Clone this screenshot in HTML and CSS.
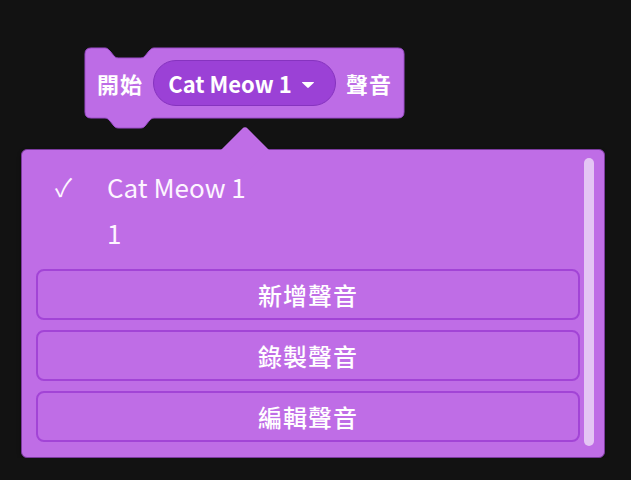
FILE: index.html
```html
<!DOCTYPE html>
<html lang="zh-Hant">
<head>
    <meta charset="UTF-8">
    <title>開始聲音</title>
    <link rel="stylesheet" href="styles.css">
</head>
<body>
    <div class="stage">
        <div class="block">
            <svg class="block-shape" width="321" height="83" viewBox="-1 -1 321 83">
                <path d="M 0 6 Q 0 0 6 0 H 20 C 22 0 23 1 25 3 L 29 8 C 31 10 32 10 35 10 H 54 C 57 10 58 10 60 8 L 64 3 C 66 1 67 0 69 0 H 313 Q 319 0 319 6 V 64 Q 319 70 313 70 H 69 C 67 70 66 71 64 73 L 60 78 C 58 80 57 80 54 80 H 35 C 32 80 31 80 29 78 L 25 73 C 23 71 22 70 20 70 H 6 Q 0 70 0 64 Z"/>
            </svg>
            <span class="block-label">開始</span>
            <span class="pill">
                Cat Meow 1
                <svg class="caret" width="14" height="8" viewBox="0 0 14 8">
                    <path d="M 1.5 1 H 12.5 Q 13.5 1 12.8 1.8 L 7.8 6.6 Q 7 7.3 6.2 6.6 L 1.2 1.8 Q 0.5 1 1.5 1 Z"/>
                </svg>
            </span>
            <span class="block-label">聲音</span>
        </div>

        <div class="dropdown">
            <div class="pointer"></div>
            <div class="scrollbar"></div>
            <ul class="options">
                <li class="option"><span class="check">✓</span>Cat Meow 1</li>
                <li class="option"><span class="check"></span>1</li>
            </ul>
            <div class="actions">
                <button class="action">新增聲音</button>
                <button class="action">錄製聲音</button>
                <button class="action">編輯聲音</button>
            </div>
        </div>
    </div>
</body>
</html>
```

FILE: styles.css
```css
body {
    margin: 0;
    background: #121212;
    font-family: "Noto Sans CJK TC", "Noto Sans", sans-serif;
    color: #fff;
}

.stage {
    padding: 48px 0 0 21px;
    display: flex;
    flex-direction: column;
    align-items: flex-start;
}

.block {
    position: relative;
    margin-left: 64px;
    width: 319px;
    height: 70px;
    padding: 0 12px;
    box-sizing: border-box;
    display: flex;
    align-items: center;
    justify-content: space-between;
}

.block-shape {
    position: absolute;
    left: -1px;
    top: -1px;
    z-index: 0;
}

.block-shape path {
    fill: #bd6ce6;
    stroke: #9d4dcc;
    stroke-width: 1;
}

.block-label,
.pill {
    position: relative;
    z-index: 1;
    font-size: 22px;
    font-weight: bold;
    line-height: 1;
}

.block-label {
    letter-spacing: 1px;
}

.pill {
    display: flex;
    align-items: center;
    gap: 9px;
    height: 46px;
    padding: 0 20px 0 14px;
    box-sizing: border-box;
    background: #9b41d6;
    border: 1px solid #8633bf;
    border-radius: 24px;
    white-space: nowrap;
}

.caret {
    margin-top: 4px;
}

.caret path {
    fill: #fff;
}

.dropdown {
    position: relative;
    margin-top: 31px;
    width: 584px;
    height: 309px;
    box-sizing: border-box;
    background: #bf6de6;
    border: 1px solid #7b3a9e;
    border-radius: 6px;
    box-shadow: 0 2px 4px rgba(0, 0, 0, 0.3);
    padding: 13px 24px 15px 14px;
    display: flex;
    flex-direction: column;
}

.pointer {
    position: absolute;
    left: 206px;
    top: -17px;
    width: 34px;
    height: 34px;
    background: #bf6de6;
    border-top-left-radius: 4px;
    transform: rotate(45deg);
}

.scrollbar {
    position: absolute;
    right: 10px;
    top: 8px;
    bottom: 11px;
    width: 10px;
    border-radius: 5px;
    background: #e4c5f4;
}

.options {
    list-style: none;
    margin: 0;
    padding: 0;
    position: relative;
}

.option {
    display: flex;
    align-items: center;
    height: 46px;
    font-size: 26px;
    color: #fdf5ff;
}

.check {
    flex: none;
    width: 52px;
    padding-left: 19px;
    font-size: 25px;
}

.actions {
    margin-top: 14px;
    display: flex;
    flex-direction: column;
    gap: 10px;
}

.action {
    height: 51px;
    background: #bf6de6;
    border: 2px solid #a244d6;
    border-radius: 8px;
    color: #fff;
    font-family: "Noto Sans CJK TC", "Noto Sans", sans-serif;
    font-size: 24px;
    font-weight: 500;
    letter-spacing: 1px;
    cursor: pointer;
}
```
